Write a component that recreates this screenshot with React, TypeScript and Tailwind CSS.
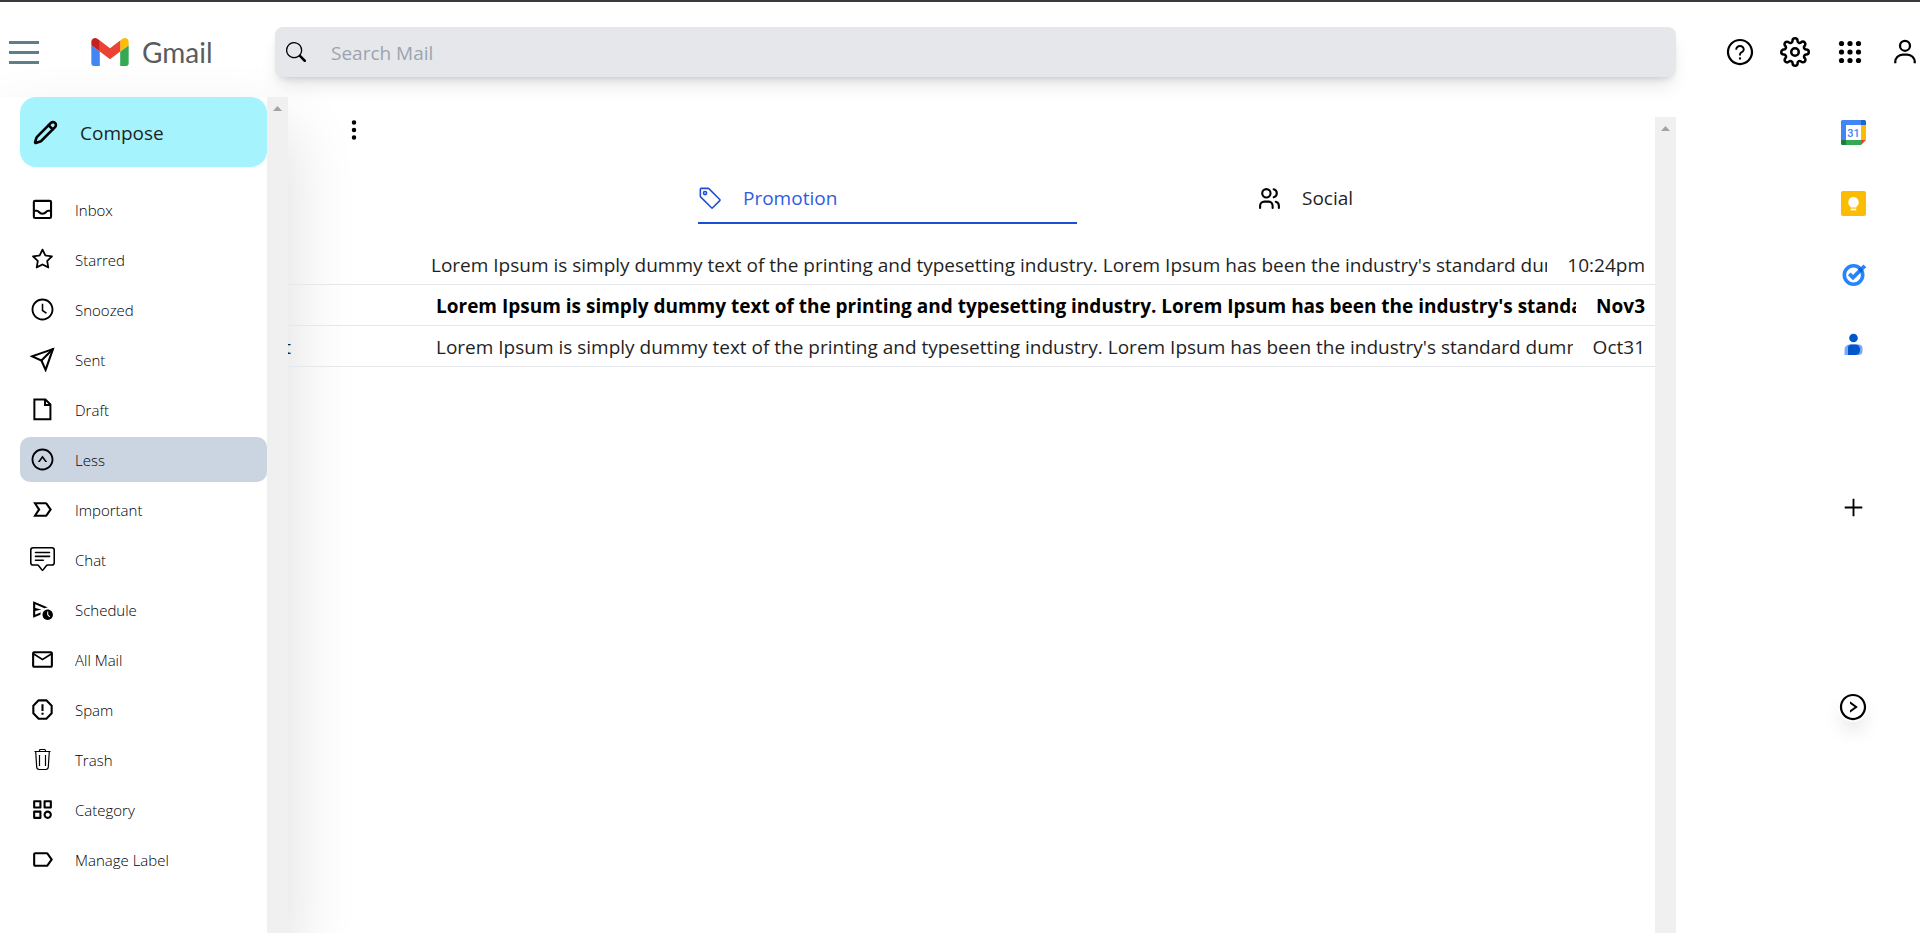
import type { ReactNode } from "react";
import {
  AiOutlineClockCircle,
  AiOutlinePlus,
  AiOutlineQuestionCircle,
  AiOutlineRightCircle,
  AiOutlineStar,
  AiOutlineUpCircle,
} from "react-icons/ai";
import { BiCategory } from "react-icons/bi";
import { BsChatSquareText, BsSearch, BsTag, BsThreeDotsVertical } from "react-icons/bs";
import { FiSend, FiSettings } from "react-icons/fi";
import { LuPencil } from "react-icons/lu";
import {
  MdLabelImportantOutline,
  MdLabelOutline,
  MdMailOutline,
  MdOutlineScheduleSend,
} from "react-icons/md";
import { TbUsers } from "react-icons/tb";

const lorem =
  "Lorem Ipsum is simply dummy text of the printing and typesetting industry. Lorem Ipsum has been the industry's standard dummy";

function InboxIcon() {
  return (
    <svg width="25" height="25" viewBox="0 0 24 24" fill="none" stroke="currentColor" strokeWidth="2">
      <rect x="3.700" y="3.700" width="16.500" height="16.500" rx="1.200" />
      <path d="M4 13.200h2.600c1 0 1.400 .5 2 1.200c.8 1 2.200 1.600 3.400 1.600s2.600-.6 3.400-1.600c.6-.7 1-1.200 2-1.200h2.600" />
    </svg>
  );
}

function DraftIcon() {
  return (
    <svg width="25" height="25" viewBox="0 0 24 24" fill="none" stroke="currentColor" strokeWidth="1.900">
      <path d="M4.200 2.400h10.600l4.800 4.800v14.200h-15.400z" />
      <path d="M14.400 2.400v5.200h5.200" />
    </svg>
  );
}

function SpamIcon() {
  return (
    <svg width="25" height="25" viewBox="0 0 24 24" fill="none" stroke="currentColor" strokeWidth="2" strokeLinejoin="round">
      <path d="M8.300 3.200h7.400l5.100 5.100v7.400l-5.100 5.100h-7.400l-5.100-5.100v-7.400z" />
      <path d="M12 7v6.400M12 15v2" />
    </svg>
  );
}

function TrashIcon() {
  return (
    <svg width="25" height="25" viewBox="0 0 25 25" fill="none" stroke="currentColor" strokeWidth="1.200">
      <path d="M4.500 4.500h16M9.500 4.500v-1a1 1 0 0 1 1-1h4a1 1 0 0 1 1 1v1" />
      <path d="M5.700 4.500l1 15.600a2.500 2.500 0 0 0 2.500 2.400h6.600a2.500 2.500 0 0 0 2.500-2.400l1-15.600" />
      <path d="M9.500 8v11M15.500 8v11" />
    </svg>
  );
}

function AppsIcon() {
  const at = [4, 12.500, 21];
  return (
    <svg width="30" height="30" viewBox="-2.500 -2.500 30 30" fill="currentColor">
      {at.map((y) => at.map((x) => <circle key={`${x}-${y}`} cx={x} cy={y} r="2.600" />))}
    </svg>
  );
}

function UserIcon() {
  return (
    <svg width="30" height="30" viewBox="0 0 24 24" fill="none" stroke="currentColor" strokeWidth="1.800">
      <circle cx="12" cy="7" r="4" />
      <path d="M4.200 21v-1a6 6 0 0 1 6-6h3.600a6 6 0 0 1 6 6v1" />
    </svg>
  );
}

function GmailMark() {
  return (
    <svg width="38" height="28" viewBox="0 0 88 66">
      <path fill="#4285f4" d="M6 66h14V32L0 17v43c0 3.300 2.700 6 6 6" />
      <path fill="#34a853" d="M68 66h14c3.300 0 6-2.700 6-6V17L68 32" />
      <path fill="#fbbc04" d="M68 6v26l20-15V9c0-7.400-8.500-11.600-14.400-7.200" />
      <path fill="#ea4335" d="M20 32V6l24 18L68 6v26L44 50" />
      <path fill="#c5221f" d="M0 9v8l20 15V6l-5.600-4.200C8.500-2.600 0 1.600 0 9" />
    </svg>
  );
}

function CalendarIcon() {
  return (
    <svg width="25" height="25" viewBox="0 0 25 25">
      <path fill="#4285f4" d="M1.500 0h18.500v5h-15v15h-5v-18.500a1.500 1.500 0 0 1 1.500-1.500z" />
      <path fill="#1967d2" d="M20 0h3.500a1.500 1.500 0 0 1 1.500 1.500v3.500h-5z" />
      <path fill="#fbbc04" d="M20 5h5v15h-5z" />
      <path fill="#34a853" d="M5 20h15v5h-15z" />
      <path fill="#188038" d="M0 20h5v5h-3.500a1.500 1.500 0 0 1-1.500-1.500z" />
      <path fill="#ea4335" d="M20 25v-5h5z" />
      <text x="12.500" y="16.500" textAnchor="middle" fontSize="11" fontWeight="500" fill="#4285f4" fontFamily="Roboto, sans-serif">31</text>
    </svg>
  );
}

function KeepIcon() {
  return (
    <svg width="25" height="25" viewBox="0 0 25 25">
      <rect width="25" height="25" rx="2" fill="#fbbc04" />
      <path fill="#fff" d="M12.500 6a5.300 5.300 0 0 0-3 9.600v1h6v-1a5.300 5.300 0 0 0-3-9.600z" />
      <rect x="9.700" y="17.600" width="5.600" height="1.800" fill="#fff" />
    </svg>
  );
}

function TasksIcon() {
  return (
    <svg width="25" height="25" viewBox="0 0 25 25" fill="none">
      <circle cx="12.500" cy="13" r="9.200" stroke="#2684fc" strokeWidth="3.600" />
      <path d="M8.300 11.900l3.700 3.700l7-7" stroke="#2684fc" strokeWidth="3.800" />
      <path d="M19 8.600l4.800-4.800" stroke="#2684fc" strokeWidth="3.800" />
      <path d="M17.200 7.400l2-2.200l3 3.200l-2.200 2.400z" fill="#0066da" />
    </svg>
  );
}

function ContactsIcon() {
  return (
    <svg width="25" height="25" viewBox="0 0 25 25">
      <path fill="#7baaf7" d="M8.500 11.500h9a4 4 0 0 1 4 4v2.500a4 4 0 0 1-4 4h-14v-5.500a5 5 0 0 1 5-5z" />
      <path fill="#0057cc" d="M10.500 11.500h4a4.500 4.500 0 0 1 4.500 4.500v1.500a4.500 4.500 0 0 1-4.500 4.500h-7.500v-7a3.500 3.500 0 0 1 3.500-3.500z" />
      <circle cx="12.500" cy="5" r="4.300" fill="#0057cc" />
    </svg>
  );
}

const folders: { label: string; icon: ReactNode; active?: boolean }[] = [
  { label: "Inbox", icon: <InboxIcon /> },
  { label: "Starred", icon: <AiOutlineStar size={25} /> },
  { label: "Snoozed", icon: <AiOutlineClockCircle size={25} /> },
  { label: "Sent", icon: <FiSend size={25} strokeLinejoin="miter" /> },
  { label: "Draft", icon: <DraftIcon /> },
  { label: "Less", icon: <AiOutlineUpCircle size={25} />, active: true },
  { label: "Important", icon: <MdLabelImportantOutline size={25} /> },
  { label: "Chat", icon: <BsChatSquareText size={25} /> },
  { label: "Schedule", icon: <MdOutlineScheduleSend size={25} /> },
  { label: "All Mail", icon: <MdMailOutline size={25} /> },
  { label: "Spam", icon: <SpamIcon /> },
  { label: "Trash", icon: <TrashIcon /> },
  { label: "Category", icon: <BiCategory size={25} /> },
  { label: "Manage Label", icon: <MdLabelOutline size={25} /> },
];

const mails = [
  { sender: "", date: "10:24pm", row: "text-[#1f1f1f]", lead: "w-[143px]" },
  { sender: "", date: "Nov3", row: "font-bold", lead: "w-[148px]" },
  { sender: "t", date: "Oct31", row: "text-[#1f1f1f]", lead: "w-[148px]" },
];

function ScrollTrack() {
  return (
    <div aria-hidden="true" className="flex w-[21px] shrink-0 justify-center bg-[#f0f0f0] pt-[9px]">
      <svg width="9" height="5" viewBox="0 0 9 5" fill="#a3a3a3">
        <path d="M0 5L4.500 0L9 5z" />
      </svg>
    </div>
  );
}

function Header() {
  return (
    <header className="flex items-center pt-[25px] pb-5 pl-[9px]">
      <div className="flex w-[266px] shrink-0 items-center">
        <button type="button" aria-label="Menu" className="flex h-[30px] w-[30px] flex-col justify-center gap-[7px]">
          <span className="h-[3px] w-full bg-[#607d8b]" />
          <span className="h-[3px] w-full bg-[#607d8b]" />
          <span className="h-[3px] w-full bg-[#607d8b]" />
        </button>
        <a href="#" className="ml-[52px] flex items-center gap-[13px] font-[Lato,sans-serif] text-[28px] leading-8 text-[#5a5c60]">
          <GmailMark />
          Gmail
        </a>
      </div>
      <label className="flex h-[50px] flex-1 items-center gap-[25px] rounded-lg bg-[#e5e7eb] pl-[11px] shadow-[0_12px_19px_-4px_rgba(0,0,0,0.1),0_5px_8px_-5px_rgba(0,0,0,0.2)]">
        <BsSearch size={20} />
        <input
          type="text"
          aria-label="Search Mail"
          placeholder="Search Mail"
          className="flex-1 bg-transparent pt-[2px] text-[19px] outline-none placeholder:text-[#9ca3af]"
        />
      </label>
      <nav className="ml-[49px] flex shrink-0 gap-[25px]">
        <button type="button" aria-label="Help"><AiOutlineQuestionCircle size={30} /></button>
        <button type="button" aria-label="Settings"><FiSettings size={30} /></button>
        <button type="button" aria-label="Apps"><AppsIcon /></button>
        <button type="button" aria-label="Account"><UserIcon /></button>
      </nav>
    </header>
  );
}

function Sidebar() {
  return (
    <aside className="flex w-[288px] shrink-0 bg-white shadow-[0_32px_64px_0px_rgba(0,0,0,0.14)]">
      <div className="flex-1 pl-5">
        <button type="button" className="flex h-[70px] w-full items-center gap-[22px] rounded-2xl bg-[#a5f3fc] pl-[13px] text-[19px] text-[#1f1f1f]">
          <LuPencil size={25} strokeWidth={2.5} className="text-black" />
          <span className="pt-[2px]">Compose</span>
        </button>
        <ul className="mt-5 flex flex-col gap-[5px]">
          {folders.map((f) => (
            <li key={f.label}>
              <a
                href="#"
                className={`flex h-[45px] items-center gap-5 rounded-[10px] pl-[10px] text-[15px] font-[350] ${f.active ? "bg-[#cbd5e1]" : ""}`}
              >
                <span className="flex w-[25px] justify-center">{f.icon}</span>
                <span className="pt-[2px]">{f.label}</span>
              </a>
            </li>
          ))}
        </ul>
      </div>
      <ScrollTrack />
    </aside>
  );
}

function MailList() {
  return (
    <main className="flex min-w-0 flex-1 flex-col pt-5">
      <div className="flex flex-1">
        <div className="min-w-0 flex-1">
          <button type="button" aria-label="More" className="ml-[53px] flex h-[25px] w-[25px] items-center justify-center">
            <BsThreeDotsVertical size={24} />
          </button>
          <div className="mt-8 flex gap-[180px] pr-[19px] pl-[410px] text-[19px]">
            <button type="button" className="flex h-[50px] flex-1 items-center gap-5 border-b-2 border-[#1d4ed8] text-[#2f5de0]">
              <BsTag size={25} className="text-[#1d4ed8]" />
              Promotion
            </button>
            <button type="button" className="flex h-[50px] flex-1 items-center gap-5 border-b-2 border-transparent text-[#1f1f1f]">
              <TbUsers size={25} className="text-black" />
              Social
            </button>
          </div>
          <ul className="mt-5 text-[19px]">
            {mails.map((m) => (
              <li key={m.date} className={`flex h-[41px] items-center border-b border-[#e5e7eb] pt-[2px] pr-[10px] whitespace-nowrap ${m.row}`}>
                <span className={`flex shrink-0 ${m.lead}`}>
                  <span className="flex w-[3px] justify-end overflow-hidden">{m.sender}</span>
                </span>
                <span className="min-w-0 flex-1 overflow-hidden">{lorem}</span>
                <time className="ml-5">{m.date}</time>
              </li>
            ))}
          </ul>
        </div>
        <ScrollTrack />
      </div>
    </main>
  );
}

function AppRail() {
  return (
    <aside className="flex w-[244px] shrink-0 justify-end">
      <div className="flex w-[134px] flex-col items-center pt-[23px]">
        <div className="flex flex-col gap-[46px]">
          <button type="button" aria-label="Calendar"><CalendarIcon /></button>
          <button type="button" aria-label="Keep"><KeepIcon /></button>
          <button type="button" aria-label="Tasks"><TasksIcon /></button>
          <button type="button" aria-label="Contacts"><ContactsIcon /></button>
        </div>
        <button type="button" aria-label="Add" className="mt-[137px]"><AiOutlinePlus size={25} /></button>
        <button type="button" aria-label="Hide panel" className="mt-[172px] rounded-full shadow-[0_12px_19px_-4px_rgba(0,0,0,0.12)]">
          <AiOutlineRightCircle size={30} />
        </button>
      </div>
    </aside>
  );
}

export default function App() {
  return (
    <div className="flex min-h-screen flex-col border-t-2 border-[#3c3840] bg-white font-['Open_Sans',sans-serif] text-black">
      <Header />
      <div className="flex flex-1 overflow-x-clip">
        <Sidebar />
        <MailList />
        <AppRail />
      </div>
    </div>
  );
}
